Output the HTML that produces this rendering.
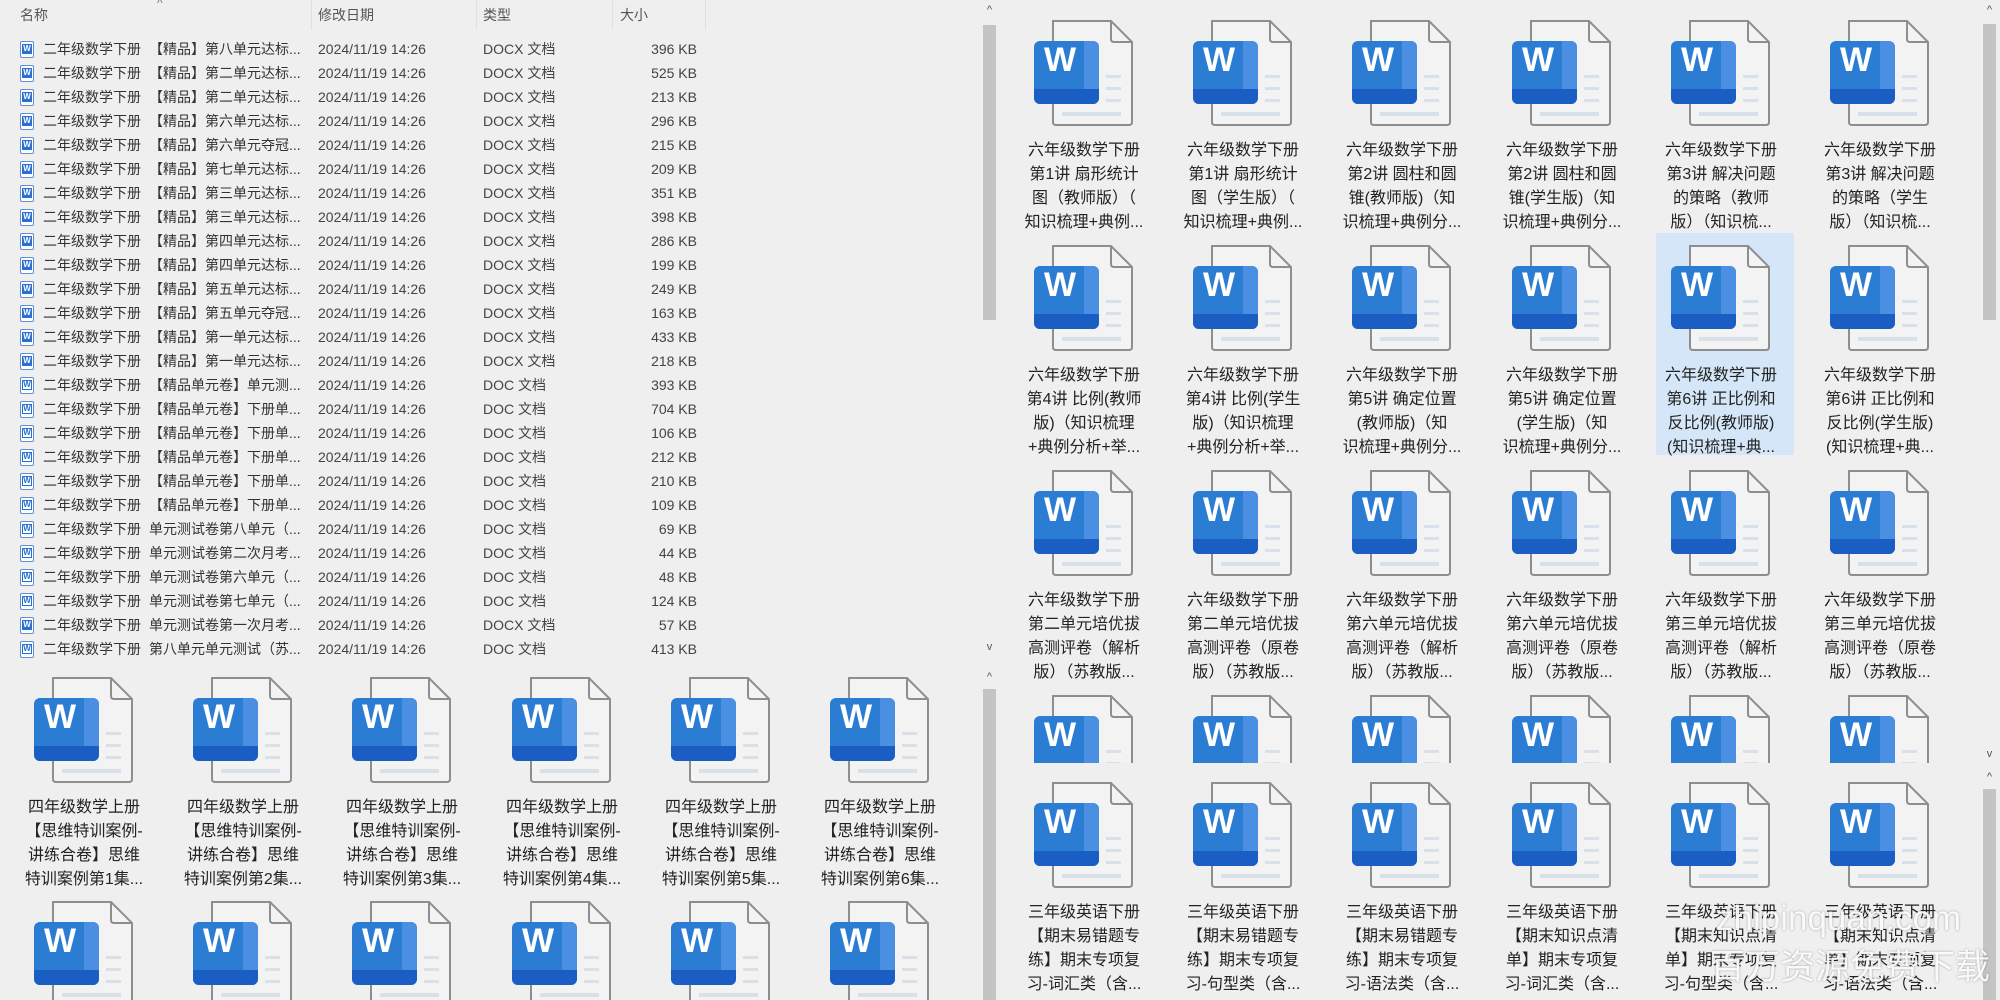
<!DOCTYPE html>
<html style="overflow:hidden"><head><meta charset="utf-8"><style>
*{margin:0;padding:0;box-sizing:border-box}
html,body{width:2000px;height:1000px;overflow:hidden}
body{background:#efefef;font-family:"Liberation Sans","Noto Sans CJK SC",sans-serif;color:#2a2a2a;position:relative}
.a{position:absolute}
.pane{position:absolute;overflow:hidden}
.hd{position:absolute;top:5px;font-size:14px;color:#555;line-height:20px}
.sep{position:absolute;top:0;width:1px;height:30px;background:#e0e0e0}
.r{position:absolute;left:0;width:980px;height:24px;font-size:14px;line-height:24px;color:#333;white-space:nowrap}
.r span{position:absolute}
.r .n1{left:43px}.r .n2{left:149px}.r .d{left:318px;color:#444}.r .t{left:483px;color:#444}.r .s{right:283px;color:#444}
.li{position:absolute;left:20px;top:4px;width:14px;height:17px;border:1px solid #5b8fd6;border-radius:2px;background:#fff}
.li b{position:absolute;left:1px;top:2px;width:10px;height:10px;background:#2b6fd0;color:#fff;font-size:8px;line-height:10px;text-align:center;font-weight:bold}
.li.o b{background:#fff;color:#2b6fd0;border:1px solid #2b6fd0;line-height:8px}
.c{position:absolute;width:160px;height:220px}
.ic{position:absolute;left:30px;top:0;width:100px;height:108px}
.ic svg{position:absolute;left:0;top:0}
.bl{position:absolute;left:0;top:22px;width:65px;height:63px;border-radius:6px;background:#2b7cd3;overflow:hidden}
.bl i{position:absolute;right:0;top:0;width:15px;height:63px;background:#4a8fe2}
.bl u{position:absolute;left:0;bottom:0;width:65px;height:15px;background:#1b5ec3}
.bl em{position:absolute;left:0;top:0;width:52px;height:38px;font-style:normal;color:#fff;font-weight:bold;font-size:34px;line-height:38px;text-align:center}
.tx{position:absolute;left:0;top:120px;width:160px;text-align:center;font-size:16px;line-height:24px;color:#222}
.sb{position:absolute;width:17px;background:#efefef;overflow:hidden}
.th{position:absolute;left:2px;width:13px;background:#c4c4c4}
.ar{position:absolute;left:0;width:17px;text-align:center;font-size:11px;color:#555;line-height:12px}
.wm{position:absolute;color:rgba(255,255,255,0.92);text-shadow:0 0 2px rgba(0,0,0,0.35);white-space:nowrap;font-size:35px}
</style></head><body>
<svg width="0" height="0" style="position:absolute"><defs><symbol id="doc" viewBox="0 0 100 108"><path d="M19 2H77L98 23V103Q98 106 95 106H22Q19 106 19 103Z" fill="#f3f3f3" stroke="#8e8e8e" stroke-width="2"/><path d="M77 2V20Q77 23 80 23H98" fill="none" stroke="#8e8e8e" stroke-width="2"/><rect x="72" y="56" width="15" height="3" fill="#d8e0ea"/><rect x="72" y="68" width="15" height="3" fill="#d8e0ea"/><rect x="72" y="80" width="15" height="3" fill="#d8e0ea"/><rect x="28" y="93" width="59" height="4" fill="#d8e0ea"/></symbol></defs></svg>

<!-- LEFT TOP LIST -->
<div class="pane" style="left:0;top:0;width:980px;height:663px">
<div class="hd" style="left:20px">名称</div><div class="a" style="left:157px;top:-4px;font-size:12px;color:#777">^</div>
<div class="sep" style="left:311px"></div><div class="hd" style="left:318px">修改日期</div>
<div class="sep" style="left:476px"></div><div class="hd" style="left:483px">类型</div>
<div class="sep" style="left:612px"></div><div class="hd" style="left:620px">大小</div>
<div class="sep" style="left:705px"></div>
<div class="r" style="top:37px"><div class="li"><b>W</b></div><span class="n1">二年级数学下册</span><span class="n2">【精品】第八单元达标...</span><span class="d">2024/11/19 14:26</span><span class="t">DOCX 文档</span><span class="s">396 KB</span></div>
<div class="r" style="top:61px"><div class="li"><b>W</b></div><span class="n1">二年级数学下册</span><span class="n2">【精品】第二单元达标...</span><span class="d">2024/11/19 14:26</span><span class="t">DOCX 文档</span><span class="s">525 KB</span></div>
<div class="r" style="top:85px"><div class="li"><b>W</b></div><span class="n1">二年级数学下册</span><span class="n2">【精品】第二单元达标...</span><span class="d">2024/11/19 14:26</span><span class="t">DOCX 文档</span><span class="s">213 KB</span></div>
<div class="r" style="top:109px"><div class="li"><b>W</b></div><span class="n1">二年级数学下册</span><span class="n2">【精品】第六单元达标...</span><span class="d">2024/11/19 14:26</span><span class="t">DOCX 文档</span><span class="s">296 KB</span></div>
<div class="r" style="top:133px"><div class="li"><b>W</b></div><span class="n1">二年级数学下册</span><span class="n2">【精品】第六单元夺冠...</span><span class="d">2024/11/19 14:26</span><span class="t">DOCX 文档</span><span class="s">215 KB</span></div>
<div class="r" style="top:157px"><div class="li"><b>W</b></div><span class="n1">二年级数学下册</span><span class="n2">【精品】第七单元达标...</span><span class="d">2024/11/19 14:26</span><span class="t">DOCX 文档</span><span class="s">209 KB</span></div>
<div class="r" style="top:181px"><div class="li"><b>W</b></div><span class="n1">二年级数学下册</span><span class="n2">【精品】第三单元达标...</span><span class="d">2024/11/19 14:26</span><span class="t">DOCX 文档</span><span class="s">351 KB</span></div>
<div class="r" style="top:205px"><div class="li"><b>W</b></div><span class="n1">二年级数学下册</span><span class="n2">【精品】第三单元达标...</span><span class="d">2024/11/19 14:26</span><span class="t">DOCX 文档</span><span class="s">398 KB</span></div>
<div class="r" style="top:229px"><div class="li"><b>W</b></div><span class="n1">二年级数学下册</span><span class="n2">【精品】第四单元达标...</span><span class="d">2024/11/19 14:26</span><span class="t">DOCX 文档</span><span class="s">286 KB</span></div>
<div class="r" style="top:253px"><div class="li"><b>W</b></div><span class="n1">二年级数学下册</span><span class="n2">【精品】第四单元达标...</span><span class="d">2024/11/19 14:26</span><span class="t">DOCX 文档</span><span class="s">199 KB</span></div>
<div class="r" style="top:277px"><div class="li"><b>W</b></div><span class="n1">二年级数学下册</span><span class="n2">【精品】第五单元达标...</span><span class="d">2024/11/19 14:26</span><span class="t">DOCX 文档</span><span class="s">249 KB</span></div>
<div class="r" style="top:301px"><div class="li"><b>W</b></div><span class="n1">二年级数学下册</span><span class="n2">【精品】第五单元夺冠...</span><span class="d">2024/11/19 14:26</span><span class="t">DOCX 文档</span><span class="s">163 KB</span></div>
<div class="r" style="top:325px"><div class="li"><b>W</b></div><span class="n1">二年级数学下册</span><span class="n2">【精品】第一单元达标...</span><span class="d">2024/11/19 14:26</span><span class="t">DOCX 文档</span><span class="s">433 KB</span></div>
<div class="r" style="top:349px"><div class="li"><b>W</b></div><span class="n1">二年级数学下册</span><span class="n2">【精品】第一单元达标...</span><span class="d">2024/11/19 14:26</span><span class="t">DOCX 文档</span><span class="s">218 KB</span></div>
<div class="r" style="top:373px"><div class="li o"><b>W</b></div><span class="n1">二年级数学下册</span><span class="n2">【精品单元卷】单元测...</span><span class="d">2024/11/19 14:26</span><span class="t">DOC 文档</span><span class="s">393 KB</span></div>
<div class="r" style="top:397px"><div class="li o"><b>W</b></div><span class="n1">二年级数学下册</span><span class="n2">【精品单元卷】下册单...</span><span class="d">2024/11/19 14:26</span><span class="t">DOC 文档</span><span class="s">704 KB</span></div>
<div class="r" style="top:421px"><div class="li o"><b>W</b></div><span class="n1">二年级数学下册</span><span class="n2">【精品单元卷】下册单...</span><span class="d">2024/11/19 14:26</span><span class="t">DOC 文档</span><span class="s">106 KB</span></div>
<div class="r" style="top:445px"><div class="li o"><b>W</b></div><span class="n1">二年级数学下册</span><span class="n2">【精品单元卷】下册单...</span><span class="d">2024/11/19 14:26</span><span class="t">DOC 文档</span><span class="s">212 KB</span></div>
<div class="r" style="top:469px"><div class="li o"><b>W</b></div><span class="n1">二年级数学下册</span><span class="n2">【精品单元卷】下册单...</span><span class="d">2024/11/19 14:26</span><span class="t">DOC 文档</span><span class="s">210 KB</span></div>
<div class="r" style="top:493px"><div class="li o"><b>W</b></div><span class="n1">二年级数学下册</span><span class="n2">【精品单元卷】下册单...</span><span class="d">2024/11/19 14:26</span><span class="t">DOC 文档</span><span class="s">109 KB</span></div>
<div class="r" style="top:517px"><div class="li o"><b>W</b></div><span class="n1">二年级数学下册</span><span class="n2">单元测试卷第八单元（...</span><span class="d">2024/11/19 14:26</span><span class="t">DOC 文档</span><span class="s">69 KB</span></div>
<div class="r" style="top:541px"><div class="li o"><b>W</b></div><span class="n1">二年级数学下册</span><span class="n2">单元测试卷第二次月考...</span><span class="d">2024/11/19 14:26</span><span class="t">DOC 文档</span><span class="s">44 KB</span></div>
<div class="r" style="top:565px"><div class="li o"><b>W</b></div><span class="n1">二年级数学下册</span><span class="n2">单元测试卷第六单元（...</span><span class="d">2024/11/19 14:26</span><span class="t">DOC 文档</span><span class="s">48 KB</span></div>
<div class="r" style="top:589px"><div class="li o"><b>W</b></div><span class="n1">二年级数学下册</span><span class="n2">单元测试卷第七单元（...</span><span class="d">2024/11/19 14:26</span><span class="t">DOC 文档</span><span class="s">124 KB</span></div>
<div class="r" style="top:613px"><div class="li"><b>W</b></div><span class="n1">二年级数学下册</span><span class="n2">单元测试卷第一次月考...</span><span class="d">2024/11/19 14:26</span><span class="t">DOCX 文档</span><span class="s">57 KB</span></div>
<div class="r" style="top:637px"><div class="li o"><b>W</b></div><span class="n1">二年级数学下册</span><span class="n2">第八单元单元测试（苏...</span><span class="d">2024/11/19 14:26</span><span class="t">DOC 文档</span><span class="s">413 KB</span></div>
</div>

<!-- LEFT BOTTOM ICONS -->
<div class="pane" style="left:0;top:663px;width:980px;height:337px">
<div class="c" style="left:4px;top:13px"><div class="ic"><svg width="100" height="108"><use href="#doc"/></svg><div class="bl"><i></i><u></u><em>W</em></div></div><div class="tx">四年级数学上册<br>【思维特训案例-<br>讲练合卷】思维<br>特训案例第1集...</div></div>
<div class="c" style="left:163px;top:13px"><div class="ic"><svg width="100" height="108"><use href="#doc"/></svg><div class="bl"><i></i><u></u><em>W</em></div></div><div class="tx">四年级数学上册<br>【思维特训案例-<br>讲练合卷】思维<br>特训案例第2集...</div></div>
<div class="c" style="left:322px;top:13px"><div class="ic"><svg width="100" height="108"><use href="#doc"/></svg><div class="bl"><i></i><u></u><em>W</em></div></div><div class="tx">四年级数学上册<br>【思维特训案例-<br>讲练合卷】思维<br>特训案例第3集...</div></div>
<div class="c" style="left:482px;top:13px"><div class="ic"><svg width="100" height="108"><use href="#doc"/></svg><div class="bl"><i></i><u></u><em>W</em></div></div><div class="tx">四年级数学上册<br>【思维特训案例-<br>讲练合卷】思维<br>特训案例第4集...</div></div>
<div class="c" style="left:641px;top:13px"><div class="ic"><svg width="100" height="108"><use href="#doc"/></svg><div class="bl"><i></i><u></u><em>W</em></div></div><div class="tx">四年级数学上册<br>【思维特训案例-<br>讲练合卷】思维<br>特训案例第5集...</div></div>
<div class="c" style="left:800px;top:13px"><div class="ic"><svg width="100" height="108"><use href="#doc"/></svg><div class="bl"><i></i><u></u><em>W</em></div></div><div class="tx">四年级数学上册<br>【思维特训案例-<br>讲练合卷】思维<br>特训案例第6集...</div></div>
<div class="c" style="left:4px;top:237px;height:100px"><div class="ic"><svg width="100" height="108"><use href="#doc"/></svg><div class="bl"><i></i><u></u><em>W</em></div></div></div>
<div class="c" style="left:163px;top:237px;height:100px"><div class="ic"><svg width="100" height="108"><use href="#doc"/></svg><div class="bl"><i></i><u></u><em>W</em></div></div></div>
<div class="c" style="left:322px;top:237px;height:100px"><div class="ic"><svg width="100" height="108"><use href="#doc"/></svg><div class="bl"><i></i><u></u><em>W</em></div></div></div>
<div class="c" style="left:482px;top:237px;height:100px"><div class="ic"><svg width="100" height="108"><use href="#doc"/></svg><div class="bl"><i></i><u></u><em>W</em></div></div></div>
<div class="c" style="left:641px;top:237px;height:100px"><div class="ic"><svg width="100" height="108"><use href="#doc"/></svg><div class="bl"><i></i><u></u><em>W</em></div></div></div>
<div class="c" style="left:800px;top:237px;height:100px"><div class="ic"><svg width="100" height="108"><use href="#doc"/></svg><div class="bl"><i></i><u></u><em>W</em></div></div></div>
</div>

<!-- LEFT SCROLLBARS -->
<div class="sb" style="left:981px;top:0;height:663px"><div class="ar" style="top:4px">^</div><div class="th" style="top:25px;height:295px"></div><div class="ar" style="top:641px">v</div></div>
<div class="sb" style="left:981px;top:663px;height:337px"><div class="ar" style="top:8px">^</div><div class="th" style="top:26px;height:311px"></div></div>

<!-- RIGHT TOP ICONS -->
<div class="pane" style="left:1000px;top:0;width:980px;height:763px">
<div class="a" style="left:656px;top:233px;width:138px;height:222px;background:#d4e6f7"></div>
<div class="c" style="left:4px;top:19px"><div class="ic"><svg width="100" height="108"><use href="#doc"/></svg><div class="bl"><i></i><u></u><em>W</em></div></div><div class="tx">六年级数学下册<br>第1讲 扇形统计<br>图（教师版）（<br>知识梳理+典例...</div></div>
<div class="c" style="left:163px;top:19px"><div class="ic"><svg width="100" height="108"><use href="#doc"/></svg><div class="bl"><i></i><u></u><em>W</em></div></div><div class="tx">六年级数学下册<br>第1讲 扇形统计<br>图（学生版）（<br>知识梳理+典例...</div></div>
<div class="c" style="left:322px;top:19px"><div class="ic"><svg width="100" height="108"><use href="#doc"/></svg><div class="bl"><i></i><u></u><em>W</em></div></div><div class="tx">六年级数学下册<br>第2讲 圆柱和圆<br>锥(教师版)（知<br>识梳理+典例分...</div></div>
<div class="c" style="left:482px;top:19px"><div class="ic"><svg width="100" height="108"><use href="#doc"/></svg><div class="bl"><i></i><u></u><em>W</em></div></div><div class="tx">六年级数学下册<br>第2讲 圆柱和圆<br>锥(学生版)（知<br>识梳理+典例分...</div></div>
<div class="c" style="left:641px;top:19px"><div class="ic"><svg width="100" height="108"><use href="#doc"/></svg><div class="bl"><i></i><u></u><em>W</em></div></div><div class="tx">六年级数学下册<br>第3讲 解决问题<br>的策略（教师<br>版）（知识梳...</div></div>
<div class="c" style="left:800px;top:19px"><div class="ic"><svg width="100" height="108"><use href="#doc"/></svg><div class="bl"><i></i><u></u><em>W</em></div></div><div class="tx">六年级数学下册<br>第3讲 解决问题<br>的策略（学生<br>版）（知识梳...</div></div>

<div class="c" style="left:4px;top:244px"><div class="ic"><svg width="100" height="108"><use href="#doc"/></svg><div class="bl"><i></i><u></u><em>W</em></div></div><div class="tx">六年级数学下册<br>第4讲 比例(教师<br>版)（知识梳理<br>+典例分析+举...</div></div>
<div class="c" style="left:163px;top:244px"><div class="ic"><svg width="100" height="108"><use href="#doc"/></svg><div class="bl"><i></i><u></u><em>W</em></div></div><div class="tx">六年级数学下册<br>第4讲 比例(学生<br>版)（知识梳理<br>+典例分析+举...</div></div>
<div class="c" style="left:322px;top:244px"><div class="ic"><svg width="100" height="108"><use href="#doc"/></svg><div class="bl"><i></i><u></u><em>W</em></div></div><div class="tx">六年级数学下册<br>第5讲 确定位置<br>(教师版)（知<br>识梳理+典例分...</div></div>
<div class="c" style="left:482px;top:244px"><div class="ic"><svg width="100" height="108"><use href="#doc"/></svg><div class="bl"><i></i><u></u><em>W</em></div></div><div class="tx">六年级数学下册<br>第5讲 确定位置<br>(学生版)（知<br>识梳理+典例分...</div></div>
<div class="c" style="left:641px;top:244px"><div class="ic"><svg width="100" height="108"><use href="#doc"/></svg><div class="bl"><i></i><u></u><em>W</em></div></div><div class="tx">六年级数学下册<br>第6讲 正比例和<br>反比例(教师版)<br>(知识梳理+典...</div></div>
<div class="c" style="left:800px;top:244px"><div class="ic"><svg width="100" height="108"><use href="#doc"/></svg><div class="bl"><i></i><u></u><em>W</em></div></div><div class="tx">六年级数学下册<br>第6讲 正比例和<br>反比例(学生版)<br>(知识梳理+典...</div></div>

<div class="c" style="left:4px;top:469px"><div class="ic"><svg width="100" height="108"><use href="#doc"/></svg><div class="bl"><i></i><u></u><em>W</em></div></div><div class="tx">六年级数学下册<br>第二单元培优拔<br>高测评卷（解析<br>版）（苏教版...</div></div>
<div class="c" style="left:163px;top:469px"><div class="ic"><svg width="100" height="108"><use href="#doc"/></svg><div class="bl"><i></i><u></u><em>W</em></div></div><div class="tx">六年级数学下册<br>第二单元培优拔<br>高测评卷（原卷<br>版）（苏教版...</div></div>
<div class="c" style="left:322px;top:469px"><div class="ic"><svg width="100" height="108"><use href="#doc"/></svg><div class="bl"><i></i><u></u><em>W</em></div></div><div class="tx">六年级数学下册<br>第六单元培优拔<br>高测评卷（解析<br>版）（苏教版...</div></div>
<div class="c" style="left:482px;top:469px"><div class="ic"><svg width="100" height="108"><use href="#doc"/></svg><div class="bl"><i></i><u></u><em>W</em></div></div><div class="tx">六年级数学下册<br>第六单元培优拔<br>高测评卷（原卷<br>版）（苏教版...</div></div>
<div class="c" style="left:641px;top:469px"><div class="ic"><svg width="100" height="108"><use href="#doc"/></svg><div class="bl"><i></i><u></u><em>W</em></div></div><div class="tx">六年级数学下册<br>第三单元培优拔<br>高测评卷（解析<br>版）（苏教版...</div></div>
<div class="c" style="left:800px;top:469px"><div class="ic"><svg width="100" height="108"><use href="#doc"/></svg><div class="bl"><i></i><u></u><em>W</em></div></div><div class="tx">六年级数学下册<br>第三单元培优拔<br>高测评卷（原卷<br>版）（苏教版...</div></div>

<div class="c" style="left:4px;top:694px;height:69px"><div class="ic"><svg width="100" height="108"><use href="#doc"/></svg><div class="bl"><i></i><u></u><em>W</em></div></div></div>
<div class="c" style="left:163px;top:694px;height:69px"><div class="ic"><svg width="100" height="108"><use href="#doc"/></svg><div class="bl"><i></i><u></u><em>W</em></div></div></div>
<div class="c" style="left:322px;top:694px;height:69px"><div class="ic"><svg width="100" height="108"><use href="#doc"/></svg><div class="bl"><i></i><u></u><em>W</em></div></div></div>
<div class="c" style="left:482px;top:694px;height:69px"><div class="ic"><svg width="100" height="108"><use href="#doc"/></svg><div class="bl"><i></i><u></u><em>W</em></div></div></div>
<div class="c" style="left:641px;top:694px;height:69px"><div class="ic"><svg width="100" height="108"><use href="#doc"/></svg><div class="bl"><i></i><u></u><em>W</em></div></div></div>
<div class="c" style="left:800px;top:694px;height:69px"><div class="ic"><svg width="100" height="108"><use href="#doc"/></svg><div class="bl"><i></i><u></u><em>W</em></div></div></div>
</div>

<!-- RIGHT BOTTOM ICONS -->
<div class="pane" style="left:1000px;top:763px;width:980px;height:237px">
<div class="c" style="left:4px;top:18px"><div class="ic"><svg width="100" height="108"><use href="#doc"/></svg><div class="bl"><i></i><u></u><em>W</em></div></div><div class="tx">三年级英语下册<br>【期末易错题专<br>练】期末专项复<br>习-词汇类（含...</div></div>
<div class="c" style="left:163px;top:18px"><div class="ic"><svg width="100" height="108"><use href="#doc"/></svg><div class="bl"><i></i><u></u><em>W</em></div></div><div class="tx">三年级英语下册<br>【期末易错题专<br>练】期末专项复<br>习-句型类（含...</div></div>
<div class="c" style="left:322px;top:18px"><div class="ic"><svg width="100" height="108"><use href="#doc"/></svg><div class="bl"><i></i><u></u><em>W</em></div></div><div class="tx">三年级英语下册<br>【期末易错题专<br>练】期末专项复<br>习-语法类（含...</div></div>
<div class="c" style="left:482px;top:18px"><div class="ic"><svg width="100" height="108"><use href="#doc"/></svg><div class="bl"><i></i><u></u><em>W</em></div></div><div class="tx">三年级英语下册<br>【期末知识点清<br>单】期末专项复<br>习-词汇类（含...</div></div>
<div class="c" style="left:641px;top:18px"><div class="ic"><svg width="100" height="108"><use href="#doc"/></svg><div class="bl"><i></i><u></u><em>W</em></div></div><div class="tx">三年级英语下册<br>【期末知识点清<br>单】期末专项复<br>习-句型类（含...</div></div>
<div class="c" style="left:800px;top:18px"><div class="ic"><svg width="100" height="108"><use href="#doc"/></svg><div class="bl"><i></i><u></u><em>W</em></div></div><div class="tx">三年级英语下册<br>【期末知识点清<br>单】期末专项复<br>习-语法类（含...</div></div>
</div>

<!-- RIGHT SCROLLBARS -->
<div class="sb" style="left:1981px;top:0;height:763px"><div class="ar" style="top:4px">^</div><div class="th" style="top:24px;height:296px"></div><div class="ar" style="top:748px">v</div></div>
<div class="sb" style="left:1981px;top:763px;height:237px"><div class="ar" style="top:8px">^</div><div class="th" style="top:26px;height:211px"></div></div>

<!-- WATERMARK -->
<div class="wm" style="left:1716px;top:898px;line-height:42px">zhipinquan.com</div>
<div class="wm" style="left:1710px;top:947px;line-height:42px">百万资源免费下载</div>
</body></html>
